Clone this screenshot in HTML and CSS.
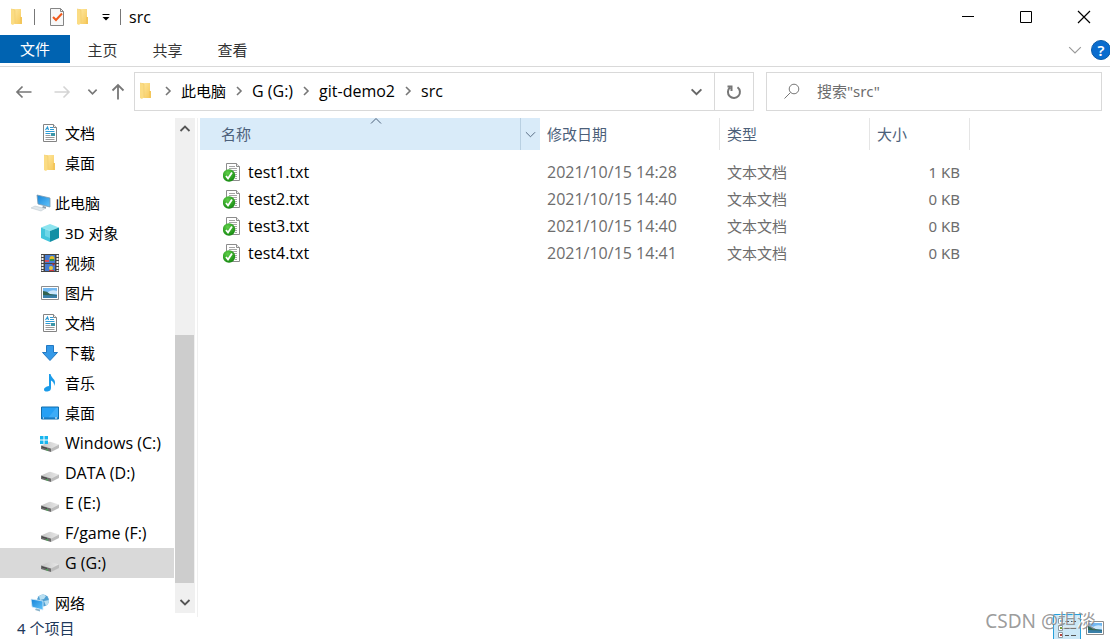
FILE: index.html
```html
<!DOCTYPE html>
<html lang="zh-CN">
<head>
  <meta charset="UTF-8">
  <meta name="viewport" content="width=device-width, initial-scale=1.0">
  <title>src</title>
  <link rel="stylesheet" href="styles.css">
</head>
<body>
  <!-- Shared icons -->
  <svg class="sprite" aria-hidden="true">
    <defs>
      <linearGradient id="gold" x1="0" y1="0" x2="1" y2="1">
        <stop offset="0" stop-color="#ffe9a2"/>
        <stop offset="1" stop-color="#f6c95c"/>
      </linearGradient>
      <linearGradient id="screen" x1="0" y1="0" x2="1" y2="1">
        <stop offset="0" stop-color="#1583d8"/>
        <stop offset="1" stop-color="#62c4fa"/>
      </linearGradient>
      <linearGradient id="metal" x1="0" y1="0" x2="1" y2="0">
        <stop offset="0" stop-color="#c4c4c4"/>
        <stop offset="1" stop-color="#e9e9e9"/>
      </linearGradient>
      <radialGradient id="green" cx="0.4" cy="0.3" r="0.7">
        <stop offset="0" stop-color="#5fcf49"/>
        <stop offset="1" stop-color="#178a12"/>
      </radialGradient>
    </defs>
    <symbol id="folder" viewBox="0 0 18 18">
      <path d="M5 1h8v15H5z" fill="url(#gold)"/>
      <path d="M12 9h2v7h-2z" fill="#f3c65b"/>
      <path d="M3 1l4 1v13l-2 2-2-1z" fill="#fbdc83"/>
      <path d="M3 1l4 1v13" fill="none" stroke="#f0c968" stroke-width=".6"/>
    </symbol>
    <symbol id="document" viewBox="0 0 18 18">
      <path d="M2.500.5h10l3 3v14h-13z" fill="#fff" stroke="#848484"/>
      <path d="M12.500.5v3h3" fill="#eee" stroke="#848484"/>
      <path d="M4.500 6l2-3 1 3M9 3.500h3M9 5.500h4M4.500 7.500h9M4.500 9.500h5" fill="none" stroke="#2d9bd5" stroke-width="1.200"/>
      <path d="M10 9h4v3h-4z" fill="#3c96a8"/>
      <path d="M4.500 11.500h5M4.500 13.500h9M4.500 15.500h9" stroke="#9a9a9a"/>
    </symbol>
    <symbol id="drive" viewBox="0 0 18 18">
      <path d="M0 11.500L8 8q1-.5 2 0l8 2.500-8 4z" fill="url(#metal)"/>
      <path d="M0 11.500l10 3v3.500L0 15z" fill="#6c6c6c"/>
      <path d="M10 14.500l8-4v3.500L10 18z" fill="#bcbcbc"/>
      <path d="M1 13l5 1.500" stroke="#444"/>
      <path d="M5 15.500l2 .7" stroke="#3fb54a" stroke-width="1.200"/>
    </symbol>
    <symbol id="picture" viewBox="0 0 18 18">
      <path d="M.5 2.500h17v13H.5z" fill="#fff" stroke="#8d8d8d"/>
      <path d="M2 4h14v10H2z" fill="#72b8f1"/>
      <path d="M7 8q4-3 9-1v3H7z" fill="#cbe7fb"/>
      <path d="M2 7q4 0 7 3l7 1v1H2z" fill="#32634f"/>
      <path d="M2 11l14 .5V14H2z" fill="#397fa8"/>
    </symbol>
    <symbol id="text-file" viewBox="0 0 18 20">
      <path d="M3.500 1.500h10l3 3v14h-13z" fill="#fff" stroke="#8c8c8c"/>
      <path d="M13.500 1.500v3h3" fill="#eee" stroke="#8c8c8c"/>
      <path d="M6 4.500h6M6 6.500h8M6 8.500h8M10 10.500h4M12 12.500h2M12 14.500h2M12 16.500h2" stroke="#a6a6a6"/>
      <circle cx="6" cy="13.500" r="6.200" fill="url(#green)"/>
      <path d="M3 14l2 2.500L9 10.500" fill="none" stroke="#fff" stroke-width="1.800"/>
    </symbol>
    <symbol id="right" viewBox="0 0 8 10">
      <path d="M2 1l4 4-4 4" fill="none" stroke="#777" stroke-width="1.600"/>
    </symbol>
    <symbol id="down" viewBox="0 0 12 12">
      <path d="M1.500 4L6 8.500 10.500 4" fill="none" stroke="currentColor" stroke-width="1.800"/>
    </symbol>
    <symbol id="thin-down" viewBox="0 0 12 12">
      <path d="M1 3.500l5 5 5-5" fill="none" stroke="currentColor"/>
    </symbol>
  </svg>

  <div class="window">
    <!-- Title Bar -->
    <header class="title-bar">
      <div class="quick-access">
        <svg class="icon"><use href="#folder"/></svg>
        <span class="divider"></span>
        <button class="tool" aria-label="属性">
          <svg class="icon" viewBox="0 0 18 18">
            <path d="M2.500.5h10l3 3v14h-13z" fill="#f8f8f8" stroke="#858585"/>
            <path d="M12.500.5v3h3" fill="none" stroke="#858585"/>
            <path d="M5 9l3 3 6-6.500" fill="none" stroke="#f15a1c" stroke-width="2"/>
          </svg>
        </button>
        <button class="tool" aria-label="新建文件夹"><svg class="icon"><use href="#folder"/></svg></button>
        <button class="tool customize" aria-label="自定义快速访问工具栏">
          <svg width="10" height="10" viewBox="0 0 10 10"><path d="M1.500 2.500h7" stroke="#000"/><path d="M1.500 5h7L5 8.500z"/></svg>
        </button>
        <span class="divider"></span>
      </div>
      <span class="window-title latin">src</span>
      <div class="window-controls">
        <button aria-label="最小化"><svg width="12" height="12"><path d="M0 5.500h12" stroke="#000"/></svg></button>
        <button aria-label="最大化"><svg width="12" height="12"><path d="M.5.5h11v11H.5z" fill="none" stroke="#000"/></svg></button>
        <button aria-label="关闭"><svg width="12" height="12"><path d="M0 0l12 12M12 0L0 12" stroke="#000" stroke-width="1.200"/></svg></button>
      </div>
    </header>

    <!-- Ribbon Tabs -->
    <div class="ribbon">
      <button class="tab file-tab">文件</button>
      <button class="tab">主页</button>
      <button class="tab">共享</button>
      <button class="tab">查看</button>
      <div class="ribbon-right">
        <button class="expand" aria-label="展开功能区"><svg width="14" height="14"><use href="#thin-down"/></svg></button>
        <button class="help" aria-label="帮助">?</button>
      </div>
    </div>

    <!-- Address Row -->
    <div class="address-row">
      <div class="history">
        <button aria-label="返回"><svg width="16" height="16" viewBox="0 0 16 16"><path d="M15.500 8H1M6.500 2.500L1 8l5.500 5.500" fill="none" stroke="#777" stroke-width="1.700"/></svg></button>
        <button aria-label="前进" disabled><svg width="16" height="16" viewBox="0 0 16 16"><path d="M.5 8H15M9.500 2.500L15 8l-5.500 5.500" fill="none" stroke="#d4d4d4" stroke-width="1.600"/></svg></button>
        <button class="recent" aria-label="最近浏览的位置"><svg width="11" height="11"><use href="#down"/></svg></button>
        <button class="up" aria-label="上移"><svg width="14" height="16" viewBox="0 0 14 16"><path d="M7 15.500V1M1.500 6.500L7 1l5.500 5.500" fill="none" stroke="#777" stroke-width="1.800"/></svg></button>
      </div>
      <div class="address-bar">
        <nav class="breadcrumb" aria-label="地址">
          <svg class="icon"><use href="#folder"/></svg>
          <svg class="sep"><use href="#right"/></svg>
          <a href="#">此电脑</a>
          <svg class="sep"><use href="#right"/></svg>
          <a href="#" class="latin">G (G:)</a>
          <svg class="sep"><use href="#right"/></svg>
          <a href="#" class="latin">git-demo2</a>
          <svg class="sep"><use href="#right"/></svg>
          <a href="#" class="latin">src</a>
        </nav>
        <button class="address-drop" aria-label="以前的位置"><svg width="13" height="13"><use href="#down"/></svg></button>
        <button class="refresh" aria-label="刷新">
          <svg width="16" height="16" viewBox="0 0 16 16"><path d="M11.500 3.200A6 6 0 1 1 4 3.500M1.500 2.500h4v4.500" fill="none" stroke="#777" stroke-width="2"/></svg>
        </button>
      </div>
      <label class="search">
        <svg width="16" height="16" viewBox="0 0 16 16"><circle cx="10" cy="6" r="4.800" fill="none" stroke="#777"/><path d="M6.500 9.500L.5 15.500" stroke="#777"/></svg>
        <input type="text" aria-label="搜索" placeholder='搜索"src"'>
      </label>
    </div>

    <!-- Main Area -->
    <div class="main">
      <aside class="sidebar">
        <nav class="tree" aria-label="导航窗格">
          <a href="#" class="node"><svg class="icon"><use href="#document"/></svg>文档</a>
          <a href="#" class="node"><svg class="icon"><use href="#folder"/></svg>桌面</a>
          <a href="#" class="node root">
            <svg class="icon" viewBox="0 0 18 18">
              <path d="M6 1l13 3v9L7 10z" fill="url(#screen)" stroke="#7c9bb0" stroke-width=".8"/>
              <path d="M12 12l3 .8v2l-4-1z" fill="#8c9daa"/>
              <path d="M4 12l10 2.500-4 2.500-10-3z" fill="#e0e7eb" stroke="#b7c3ca" stroke-width=".5"/>
            </svg>此电脑</a>
          <a href="#" class="node">
            <svg class="icon" viewBox="0 0 18 18">
              <path d="M9 0l9 3.500L9 7 0 3.500z" fill="#8de4ef"/>
              <path d="M0 3.500L9 7v11l-9-4z" fill="#43c5dc"/>
              <path d="M18 3.500L9 7v11l9-4z" fill="#128fa5"/>
              <path d="M4 4l5 1.500V14l-5-2z" fill="#9beaf4" opacity=".5"/>
            </svg>3D 对象</a>
          <a href="#" class="node">
            <svg class="icon" viewBox="0 0 18 18">
              <path d="M0 0h18v18H0z" fill="#454545"/>
              <path d="M4 1h10v8H4zM4 10h10v7H4z" fill="#447bd0"/>
              <path d="M1.500 1v16M16.500 1v16" stroke="#f5f5f5" stroke-width="2" stroke-dasharray="2 1"/>
              <circle cx="11" cy="4.500" r="2.500" fill="#e4bd24"/>
              <path d="M9 5h4v2H9z" fill="#35914c"/>
              <path d="M4 6h4v2H4z" fill="#d94e5a"/>
              <circle cx="10" cy="14" r="2" fill="#eac83d"/>
              <path d="M11 9l3 1-2 2z" fill="#b52f34"/>
              <path d="M8 16h5v1H8z" fill="#cf383b"/>
            </svg>视频</a>
          <a href="#" class="node"><svg class="icon"><use href="#picture"/></svg>图片</a>
          <a href="#" class="node"><svg class="icon"><use href="#document"/></svg>文档</a>
          <a href="#" class="node">
            <svg class="icon" viewBox="0 0 18 18"><path d="M5.500 1.500h7v7h4L9 16.500 1.500 8.500h4z" fill="#3499e8" stroke="#2378c2"/></svg>下载</a>
          <a href="#" class="node">
            <svg class="icon" viewBox="0 0 18 18">
              <path d="M8 0h1.500q.5 2.500 2.500 4.500 3.500 3 1 7.500 .5-4-3-5.500v7.500q0 3-3.500 3.500-3.500.3-3.500-2 0-2.500 5-3.500z" fill="#1a9be9"/>
            </svg>音乐</a>
          <a href="#" class="node">
            <svg class="icon" viewBox="0 0 18 18">
              <path d="M.5 3h17v12H.5z" fill="#25a0f5" stroke="#126ead"/>
              <path d="M7 14L15 4h2v10z" fill="#55b8fa" opacity=".5"/>
              <path d="M1 14h16" stroke="#1470b4"/>
              <path d="M2 14h1M14 14h2" stroke="#fff"/>
            </svg>桌面</a>
          <a href="#" class="node latin">
            <svg class="icon" viewBox="0 0 18 18">
              <use href="#drive" width="18" height="18"/>
              <path d="M-1 2h3.500v3.500H-1zM3.500 2H7v3.500H3.500zM-1 6.500h3.500V10H-1zM3.500 6.500H7V10H3.500z" fill="#18b5ee"/>
            </svg>Windows (C:)</a>
          <a href="#" class="node latin"><svg class="icon"><use href="#drive"/></svg>DATA (D:)</a>
          <a href="#" class="node latin"><svg class="icon"><use href="#drive"/></svg>E (E:)</a>
          <a href="#" class="node latin"><svg class="icon"><use href="#drive"/></svg>F/game (F:)</a>
          <a href="#" class="node latin selected"><svg class="icon"><use href="#drive"/></svg>G (G:)</a>
          <a href="#" class="node root">
            <svg class="icon" viewBox="0 0 18 18">
              <circle cx="12" cy="6.500" r="6" fill="#4f9fd2"/>
              <path d="M8 2q4-3 7 0l-2 3-4 1zM13 7l5-1q0 4-3 6z" fill="#b9dff1"/>
              <path d="M0 5l12 2v9L1 13z" fill="url(#screen)" stroke="#d8eefa" stroke-width=".8"/>
              <path d="M5 14.500l4 1v2l-5-1.500z" fill="#8bb4cb"/>
            </svg>网络</a>
        </nav>
        <div class="scrollbar">
          <button aria-label="向上滚动"><svg class="flip" width="12" height="12"><use href="#down"/></svg></button>
          <div class="track"><div class="thumb"></div></div>
          <button aria-label="向下滚动"><svg width="12" height="12"><use href="#down"/></svg></button>
        </div>
      </aside>

      <section class="files">
        <table>
          <thead>
            <tr>
              <th class="col-name">
                <div class="name-head">
                  <span>名称</span>
                  <svg class="sort-mark flip" width="12" height="12"><use href="#thin-down"/></svg>
                  <button class="filter" aria-label="筛选"><svg width="11" height="11"><use href="#thin-down"/></svg></button>
                </div>
              </th>
              <th class="col-date">修改日期</th>
              <th class="col-type">类型</th>
              <th class="col-size">大小</th>
              <th></th>
            </tr>
          </thead>
          <tbody>
            <tr>
              <td class="latin"><div class="name"><svg class="file-icon"><use href="#text-file"/></svg>test1.txt</div></td>
              <td class="latin">2021/10/15 14:28</td><td>文本文档</td><td class="size">1 KB</td><td></td>
            </tr>
            <tr>
              <td class="latin"><div class="name"><svg class="file-icon"><use href="#text-file"/></svg>test2.txt</div></td>
              <td class="latin">2021/10/15 14:40</td><td>文本文档</td><td class="size">0 KB</td><td></td>
            </tr>
            <tr>
              <td class="latin"><div class="name"><svg class="file-icon"><use href="#text-file"/></svg>test3.txt</div></td>
              <td class="latin">2021/10/15 14:40</td><td>文本文档</td><td class="size">0 KB</td><td></td>
            </tr>
            <tr>
              <td class="latin"><div class="name"><svg class="file-icon"><use href="#text-file"/></svg>test4.txt</div></td>
              <td class="latin">2021/10/15 14:41</td><td>文本文档</td><td class="size">0 KB</td><td></td>
            </tr>
          </tbody>
        </table>
      </section>
    </div>

    <!-- Status Bar -->
    <footer class="status-bar">
      <span class="count">4 个项目</span>
      <div class="views">
        <button class="view active" aria-label="详细信息">
          <svg width="20" height="20" viewBox="0 0 20 20">
            <path d="M1.500.5h4v5h-4zM1.500 7.500h4v5h-4zM1.500 14.500h4v5h-4z" fill="#fff" stroke="#8c9aa3"/>
            <path d="M3 2h2v2H3z" fill="#447bd0"/><path d="M3 9h2v2H3z" fill="#7b9a35"/><path d="M3 16h2v2H3z" fill="#b5423c"/>
            <path d="M8 3.500h4M14 3.500h5M8 10.500h4M14 10.500h5M8 17.500h4M14 17.500h5" stroke="#555"/>
          </svg>
        </button>
        <button class="view" aria-label="大图标"><svg class="icon"><use href="#picture"/></svg></button>
      </div>
    </footer>
    <div class="watermark">CSDN @坦淡</div>
  </div>
</body>
</html>
```
FILE: styles.css
```css
/* General Styles */
* {
  box-sizing: border-box;
}

body {
  margin: 0;
  font-family: "Noto Sans", "Noto Sans CJK SC", sans-serif;
  font-size: 15px;
  line-height: 20px;
  color: #000;
  background: #fff;
}

button {
  padding: 0;
  border: 0;
  background: none;
  font: inherit;
  color: inherit;
  display: flex;
  align-items: center;
  justify-content: center;
}

a {
  color: inherit;
  text-decoration: none;
}

svg {
  flex-shrink: 0;
  overflow: visible;
}

.sprite {
  position: absolute;
  width: 0;
  height: 0;
}

.icon {
  width: 18px;
  height: 18px;
}

.flip {
  transform: rotate(180deg);
}

.latin {
  font-family: "Open Sans", "Noto Sans", sans-serif;
  font-size: 16px;
}

.window {
  position: relative;
  display: flex;
  flex-direction: column;
  height: 100vh;
  overflow: hidden;
}

/* Title Bar */
.title-bar {
  display: flex;
  align-items: center;
  height: 35px;
  flex-shrink: 0;
  padding: 0 0 2px 8px;
}

.quick-access {
  display: flex;
  align-items: center;
  gap: 8px;
}

.divider {
  width: 1px;
  height: 16px;
  background: #777;
}

.tool:first-of-type {
  margin-left: 5px;
}

.customize {
  width: 12px;
}

.window-title {
  margin-left: 8px;
}

.window-controls {
  display: flex;
  margin-left: auto;
  margin-right: -3px;
  align-self: stretch;
}

.window-controls button {
  width: 58px;
}

/* Ribbon Tabs */
.ribbon {
  display: flex;
  height: 32px;
  flex-shrink: 0;
  border-bottom: 1px solid #d9d9d9;
  color: #333;
}

.tab {
  width: 65px;
  height: 29px;
}

.file-tab {
  width: 70px;
  height: 28px;
  background: #0063b1;
  color: #fff;
}

.ribbon-right {
  display: flex;
  align-items: center;
  gap: 9px;
  height: 30px;
  margin-left: auto;
  margin-right: -1px;
}

.expand {
  color: #999;
}

.help {
  width: 20px;
  height: 20px;
  border: 1px solid #0a5ba8;
  border-radius: 50%;
  background: #0a6cce;
  color: #fff;
  font-weight: 600;
}

/* Address Row */
.address-row {
  display: flex;
  flex-shrink: 0;
  padding: 5px 8px 7px 0;
}

.history {
  display: flex;
  align-items: center;
  width: 134px;
  padding-left: 16px;
  gap: 22px;
}

.recent {
  margin-left: -5px;
  color: #777;
}

.up {
  margin-left: -9px;
}

.address-bar {
  display: flex;
  flex: 1;
  height: 39px;
  border: 1px solid #d9d9d9;
}

.breadcrumb {
  display: flex;
  align-items: center;
  flex: 1;
  padding-left: 2px;
  padding-bottom: 2px;
  gap: 9px;
}

.sep {
  width: 8px;
  height: 10px;
}

.address-drop {
  width: 36px;
  color: #666;
}

.refresh {
  width: 39px;
  border-left: 1px solid #d9d9d9;
}

.search {
  display: flex;
  align-items: center;
  gap: 17px;
  width: 336px;
  height: 39px;
  margin-left: 12px;
  padding-left: 17px;
  padding-bottom: 2px;
  border: 1px solid #d9d9d9;
}

.search input {
  flex: 1;
  min-width: 0;
  padding: 0;
  border: 0;
  outline: none;
  font: inherit;
}

.search input::placeholder {
  color: #6d6d6d;
}

/* Main Area */
.main {
  display: flex;
  flex: 1;
  min-height: 0;
}

.sidebar {
  display: flex;
  width: 198px;
  flex-shrink: 0;
  border-right: 1px solid #f0f0f0;
}

.tree {
  flex: 1;
}

.node {
  display: flex;
  align-items: center;
  gap: 6px;
  height: 30px;
  padding-left: 41px;
}

.root {
  margin-top: 10px;
  padding-left: 31px;
}

.selected {
  background: #d9d9d9;
}

.scrollbar {
  display: flex;
  flex-direction: column;
  width: 20px;
  margin: 0 2px 4px 1px;
  background: #f0f0f0;
  color: #555;
}

.scrollbar button {
  height: 22px;
}

.track {
  display: flex;
  flex-direction: column;
  justify-content: flex-end;
  flex: 1;
  padding-bottom: 8px;
}

.thumb {
  height: 56%;
  margin-right: 1px;
  background: #cdcdcd;
}

/* File List */
.files {
  flex: 1;
  padding-left: 2px;
}

table {
  width: 100%;
  table-layout: fixed;
  border-collapse: separate;
  border-spacing: 0;
}

th {
  height: 32px;
  padding: 0 7px;
  border-right: 1px solid #e5e5e5;
  font-weight: normal;
  text-align: left;
  color: #4c607a;
}

th:last-child {
  border: 0;
}

.col-name {
  width: 340px;
  padding: 0;
  border: 0;
  background: #d9ebf9;
}

.col-date {
  width: 180px;
}

.col-type {
  width: 150px;
}

.col-size {
  width: 100px;
}

.name-head {
  position: relative;
  display: flex;
  align-items: center;
  justify-content: space-between;
  height: 32px;
  padding-left: 21px;
}

.sort-mark {
  position: absolute;
  top: -3px;
  left: 50%;
}

.filter {
  width: 20px;
  height: 32px;
  border-left: 1px solid #b9d0e2;
}

tbody::before {
  content: "";
  display: block;
  height: 8px;
}

td {
  height: 27px;
  padding: 0 7px;
  color: #6d6d6d;
}

.name {
  display: flex;
  align-items: center;
  gap: 7px;
  padding-left: 16px;
  color: #000;
}

.file-icon {
  width: 18px;
  height: 20px;
}

.size {
  padding-right: 10px;
  text-align: right;
}

/* Status Bar */
.status-bar {
  display: flex;
  justify-content: space-between;
  height: 22px;
  flex-shrink: 0;
  padding-left: 17px;
  color: #1e395b;
}

.count {
  padding-top: 1px;
}

.views {
  display: flex;
  align-items: center;
  padding-right: 1px;
}

.view {
  width: 28px;
  height: 28px;
}

.active {
  border: 1px solid #26a0da;
  background: #cce8f7;
}

.watermark {
  position: absolute;
  right: 14px;
  bottom: 4px;
  font-size: 19px;
  line-height: 28px;
  color: rgba(130, 130, 130, 0.8);
  text-shadow: -1px -1px 0 rgba(255, 255, 255, 0.7);
  pointer-events: none;
}
```
